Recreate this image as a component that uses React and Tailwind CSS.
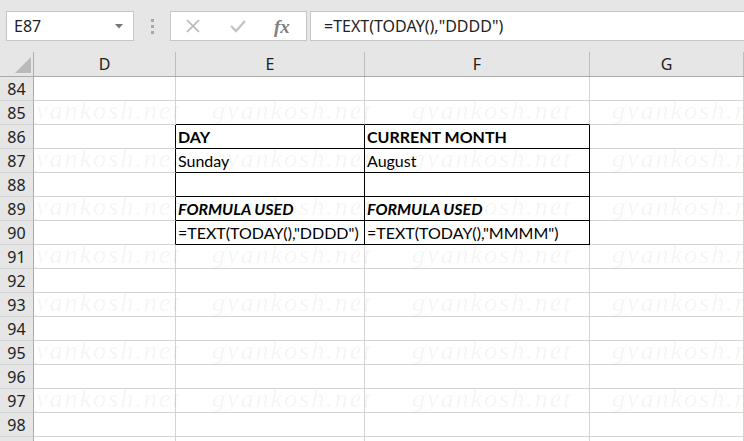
import React from "react";

const COLS = [
  { key: "D", w: "w-[142px]" },
  { key: "E", w: "w-[189px]" },
  { key: "F", w: "w-[225px]" },
  { key: "G", w: "flex-1" },
];

const DATA = {
  86: { E: { t: "DAY", s: "font-bold" }, F: { t: "CURRENT MONTH", s: "font-bold" } },
  87: { E: { t: "Sunday", s: "" }, F: { t: "August", s: "" } },
  89: { E: { t: "FORMULA USED", s: "font-bold italic" }, F: { t: "FORMULA USED", s: "font-bold italic" } },
  90: { E: { t: '=TEXT(TODAY(),"DDDD")', s: "" }, F: { t: '=TEXT(TODAY(),"MMMM")', s: "" } },
};

const ROWS = [84, 85, 86, 87, 88, 89, 90, 91, 92, 93, 94, 95, 96, 97, 98, 99];

function cellBorder(r, c) {
  const bottomBlack = (c === "E" || c === "F") && r >= 85 && r <= 90;
  const rightBlack = (c === "D" || c === "E" || c === "F") && r >= 86 && r <= 90;
  return (
    (bottomBlack ? "border-b-black " : "border-b-[#d4d4d4] ") +
    (rightBlack ? "border-r-black" : "border-r-[#d4d4d4]")
  );
}

const WM_ROWS = [112, 160, 208, 256, 304, 352, 400];
const WM_COLS = [
  { x: 36, t: "yankosh.net" },
  { x: 212, t: "gyankosh.net" },
  { x: 412, t: "gyankosh.net" },
  { x: 612, t: "gyankosh.n" },
];

export default function App() {
  return (
    <div className="w-[744px] h-[441px] overflow-hidden bg-white relative" style={{ fontFamily: "Lato, 'Noto Sans', sans-serif" }}>
      {/* top bar */}
      <div className="h-[52px] bg-[#e6e6e6] flex items-start pt-[11px]">
        <div className="ml-[6px] w-[128px] h-[30px] bg-white border border-[#c6c6c6] flex items-center justify-between pl-[7px] pr-[10px]">
          <span className="text-[16px] text-[#222]" style={{ fontFamily: "'Noto Sans', sans-serif" }}>E87</span>
          <svg width="8" height="5" viewBox="0 0 8 5"><path d="M0 0 L8 0 L4 4.5 Z" fill="#777" /></svg>
        </div>
        <div className="w-[36px] h-[30px] flex flex-col items-center justify-center gap-[3px]">
          <div className="w-[3px] h-[3px] bg-[#a8a8a8]" />
          <div className="w-[3px] h-[3px] bg-[#a8a8a8]" />
          <div className="w-[3px] h-[3px] bg-[#a8a8a8]" />
        </div>
        <div className="w-[137px] h-[30px] bg-white border border-[#c6c6c6] flex items-center">
          <svg className="ml-[14px]" width="16" height="16" viewBox="0 0 16 16">
            <path d="M2 2 L14 14 M14 2 L2 14" stroke="#b4b4b4" strokeWidth="1.6" />
          </svg>
          <svg className="ml-[28px]" width="18" height="16" viewBox="0 0 18 16">
            <path d="M2 8 L7 13 L16 3" stroke="#c4c4c4" strokeWidth="2.4" fill="none" />
          </svg>
          <span
            className="ml-[27px] text-[19px] italic font-bold text-[#808080] leading-none"
            style={{ fontFamily: "'Liberation Serif', serif" }}
          >
            fx
          </span>
        </div>
        <div className="ml-[3px] flex-1 h-[30px] bg-white border border-[#c6c6c6] border-r-0 flex items-center pl-[13px]">
          <span className="text-[16px] text-[#222]" style={{ fontFamily: "'Noto Sans', sans-serif" }}>
            =TEXT(TODAY(),"DDDD")
          </span>
        </div>
      </div>

      {/* column headers */}
      <div className="flex h-[25px] bg-[#e6e6e6] border-b border-[#ababab]">
        <div className="w-[34px] h-full border-r border-[#ababab] relative">
          <svg className="absolute left-[15px] top-[5px]" width="16" height="16" viewBox="0 0 16 16">
            <path d="M16 0 L16 16 L0 16 Z" fill="#b9b9b9" />
          </svg>
        </div>
        {COLS.map((c) => (
          <div
            key={c.key}
            className={`${c.w} h-full border-r border-[#bdbdbd] flex items-center justify-center text-[16px] text-[#222]`}
            style={{ fontFamily: "'Noto Sans', sans-serif" }}
          >
            {c.key}
          </div>
        ))}
      </div>

      {/* body */}
      <div className="relative">
        {ROWS.map((r) => (
          <div key={r} className="flex h-[24px]">
            <div
              className="w-[34px] h-full bg-[#e6e6e6] border-r border-r-[#ababab] border-b border-b-[#d0d0d0] flex items-center justify-center text-[16px] text-[#222]"
              style={{ fontFamily: "'Noto Sans', sans-serif" }}
            >
              {r < 99 ? r : null}
            </div>
            {COLS.map((c) => {
              const d = DATA[r] && DATA[r][c.key];
              return (
                <div
                  key={c.key}
                  className={`${c.w} h-full border-b border-r ${cellBorder(r, c.key)} flex items-end pl-[2px] pb-[1px] overflow-hidden`}
                >
                  {d ? (
                    <span className={`text-[16px] leading-[20px] text-black whitespace-nowrap ${d.s}`}>{d.t}</span>
                  ) : null}
                </div>
              );
            })}
          </div>
        ))}

        {/* watermark overlay */}
        <div className="absolute left-[34px] top-0 right-0 bottom-0 overflow-hidden pointer-events-none">
          {WM_ROWS.map((y) =>
            WM_COLS.map((w) => (
              <span
                key={`${w.x}-${y}`}
                className="absolute whitespace-nowrap italic text-[26px] leading-none text-[#3a5a3a]/[0.06]"
                style={{ left: w.x - 34, top: y - 77 - 14, fontFamily: "'Liberation Serif', serif", letterSpacing: "2px" }}
              >
                {w.t}
              </span>
            ))
          )}
        </div>
      </div>
    </div>
  );
}
